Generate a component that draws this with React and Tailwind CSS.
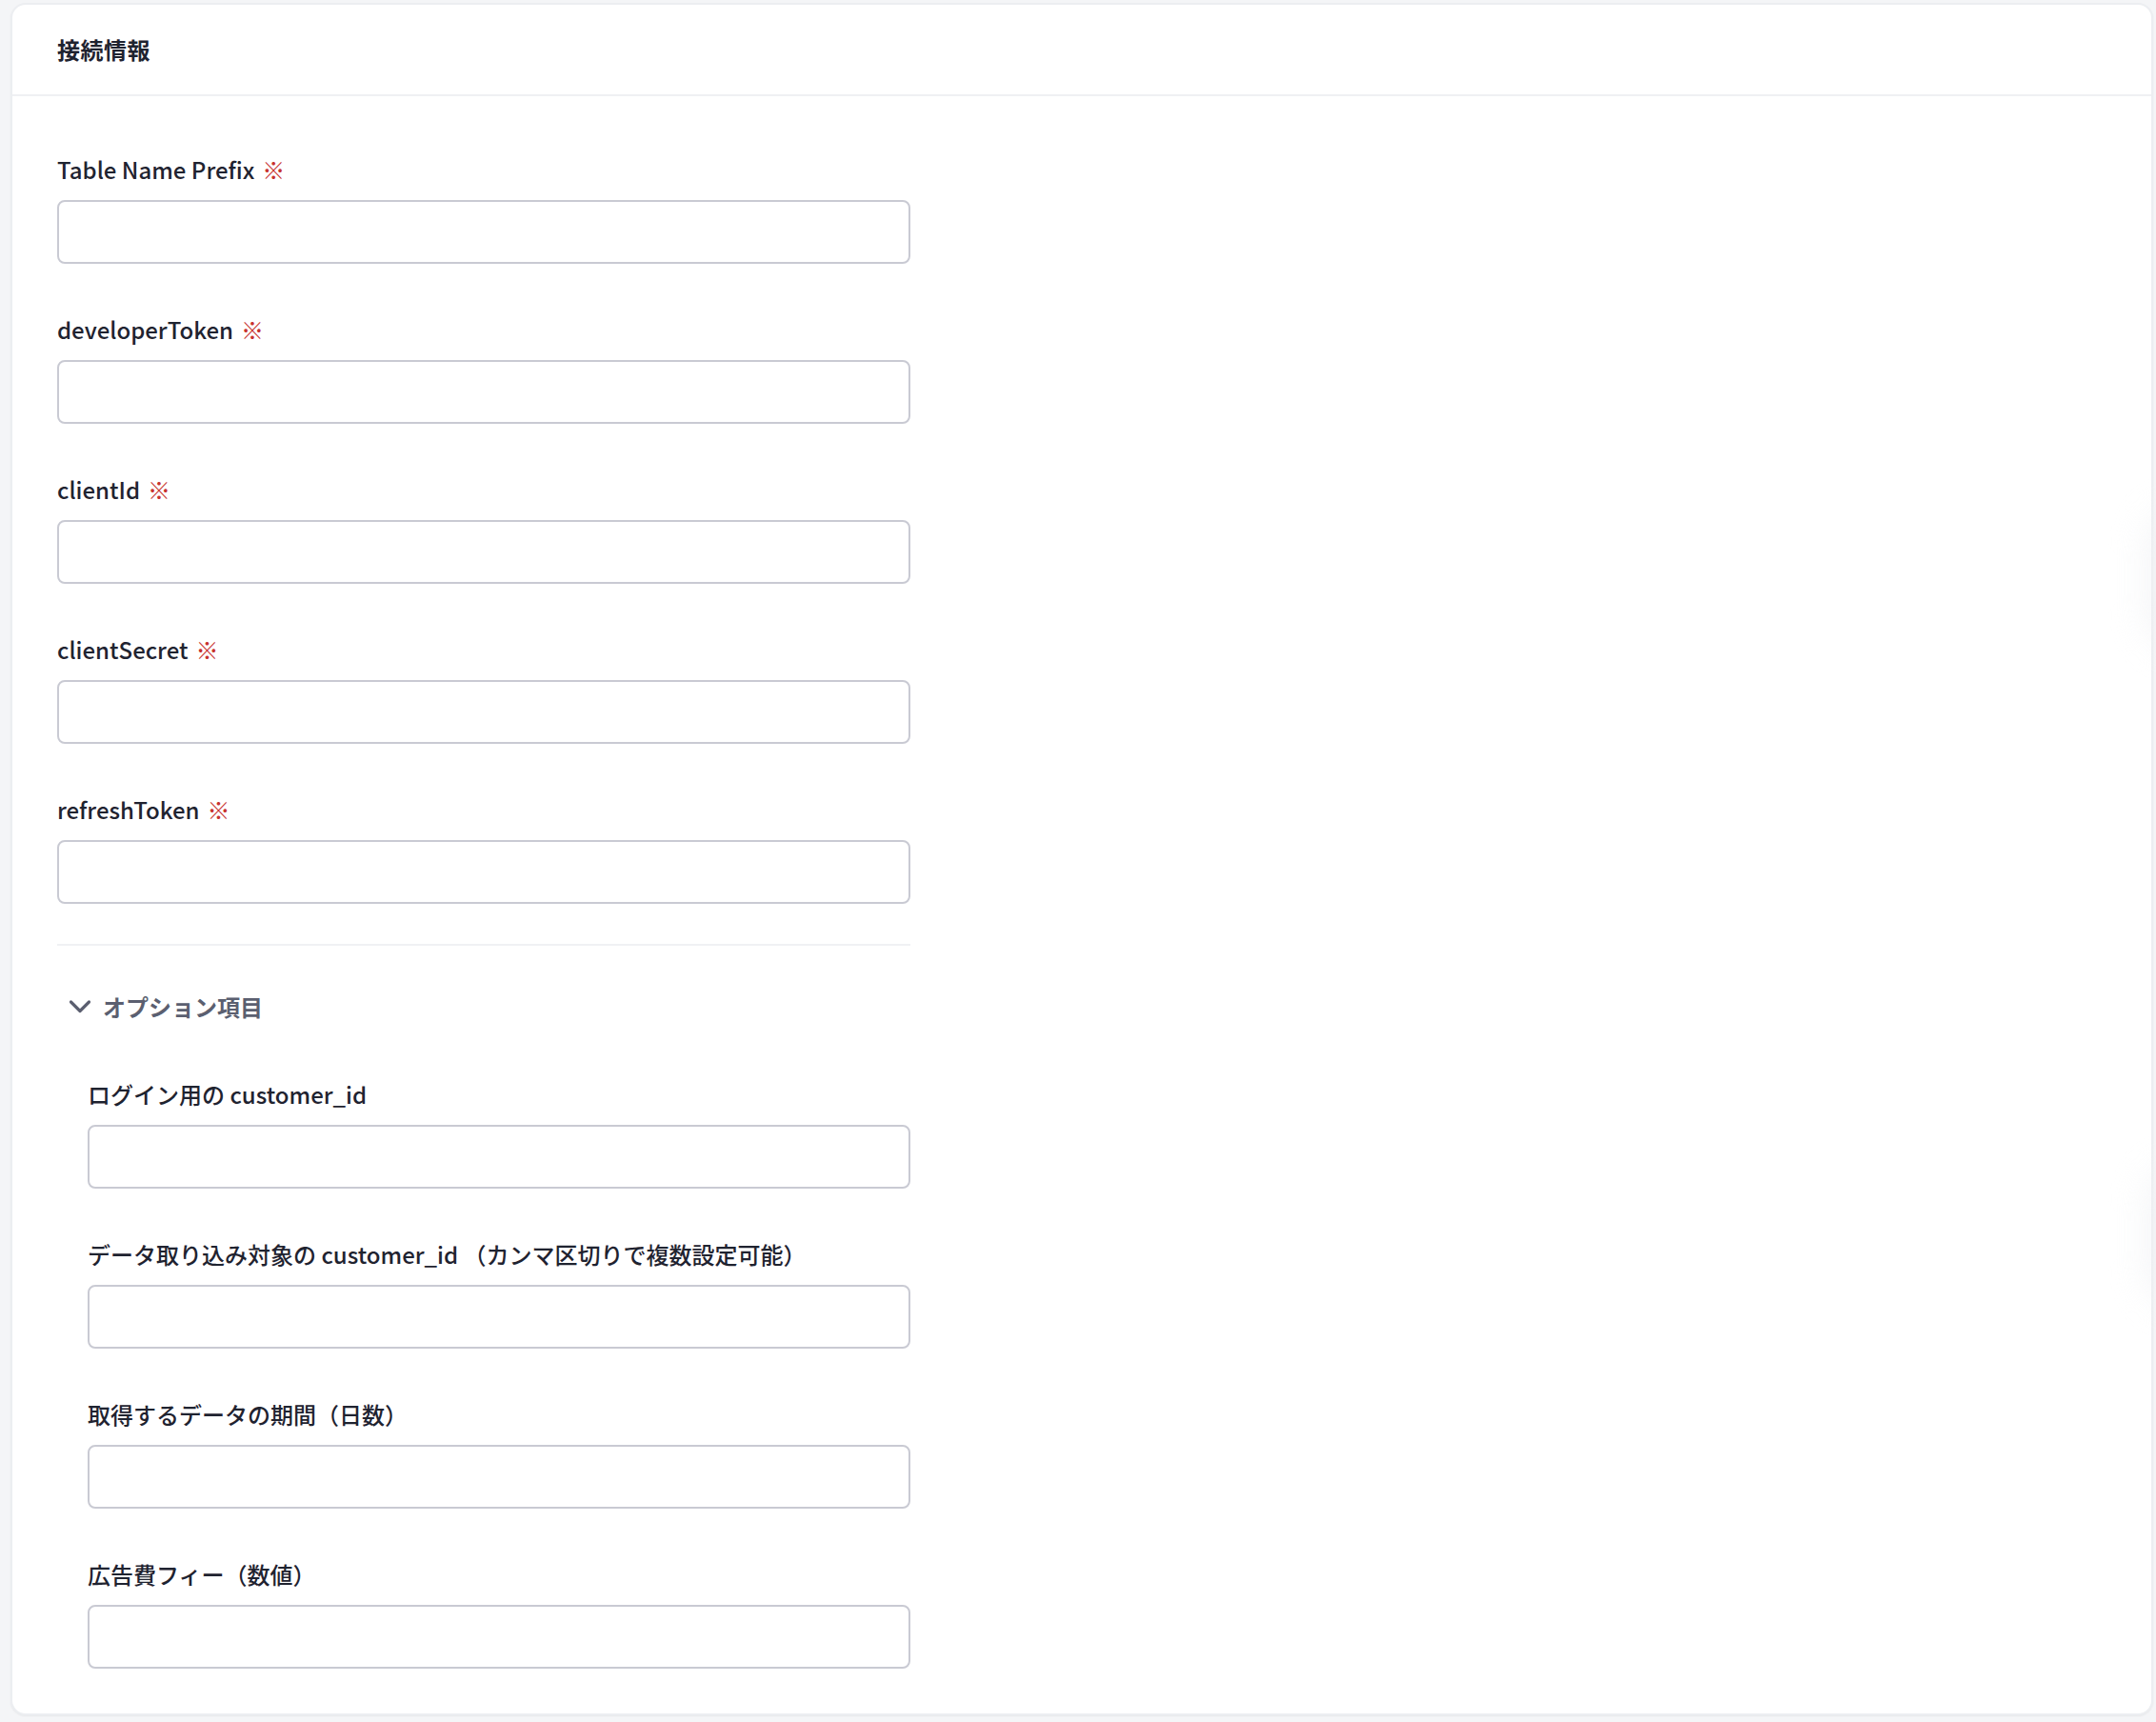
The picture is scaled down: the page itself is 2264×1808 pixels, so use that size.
import React from "react";

const FONT = { fontFamily: '"Noto Sans CJK JP", "Noto Sans", sans-serif' };

function Field({ label, required }) {
  return (
    <div className="flex flex-col">
      <label className="text-[24px] leading-[36px] font-medium text-[#1f2330] mb-[14px]">
        {label}
        {required && <span className="text-[#c7322e] ml-[8px]">※</span>}
      </label>
      <input
        type="text"
        className="h-[67px] w-full rounded-lg border-2 border-[#c9cad3] bg-white px-4 text-[24px] outline-none"
      />
    </div>
  );
}

export default function App() {
  const main = ["Table Name Prefix", "developerToken", "clientId", "clientSecret", "refreshToken"];
  const opts = [
    "ログイン用の customer_id",
    "データ取り込み対象の customer_id （カンマ区切りで複数設定可能）",
    "取得するデータの期間（日数）",
    "広告費フィー（数値）",
  ];
  return (
    <div style={FONT} className="relative min-h-screen w-full bg-[#f4f5f7] pt-[3px] pl-[11px] pr-[3px] pb-[8px] overflow-hidden">
      <div className="rounded-[16px] border-2 border-[#eceef1] bg-white shadow-[0_1px_2px_rgba(0,0,0,0.06)]">
        <div className="h-[96px] flex items-center px-[47px] border-b-2 border-[#eff0f3]">
          <h2 className="text-[24px] font-bold text-[#1f2330] tracking-[0.5px]">接続情報</h2>
        </div>
        <div className="pl-[47px] pt-[59px] pb-[47px]">
          <div className="w-[896px]">
            <div className="flex flex-col gap-[51px]">
              {main.map((l) => (
                <Field key={l} label={l} required />
              ))}
            </div>
            <div className="mt-[42px] h-[2px] bg-[#f0f1f4]" />
            <div className="mt-[46px] flex items-center pl-[12px] h-[36px] text-[#5b5f70]">
              <svg width="24" height="16" viewBox="0 0 24 16" fill="none" stroke="currentColor" strokeWidth="3.2" strokeLinecap="round" strokeLinejoin="round">
                <path d="M2.5 3 L12 12.5 L21.5 3" />
              </svg>
              <span className="ml-[12px] text-[24px] font-bold">オプション項目</span>
            </div>
            <div className="mt-[56px] pl-[32px] flex flex-col gap-[51px]">
              {opts.map((l) => (
                <Field key={l} label={l} />
              ))}
            </div>
          </div>
        </div>
      </div>
      <div className="absolute right-[-60px] top-[535px] h-[145px] w-[70px] rounded-full bg-[#f0f1f4] blur-[18px] opacity-70" />
      <div className="absolute right-[-60px] top-[1225px] h-[145px] w-[70px] rounded-full bg-[#f0f1f4] blur-[18px] opacity-70" />
    </div>
  );
}
